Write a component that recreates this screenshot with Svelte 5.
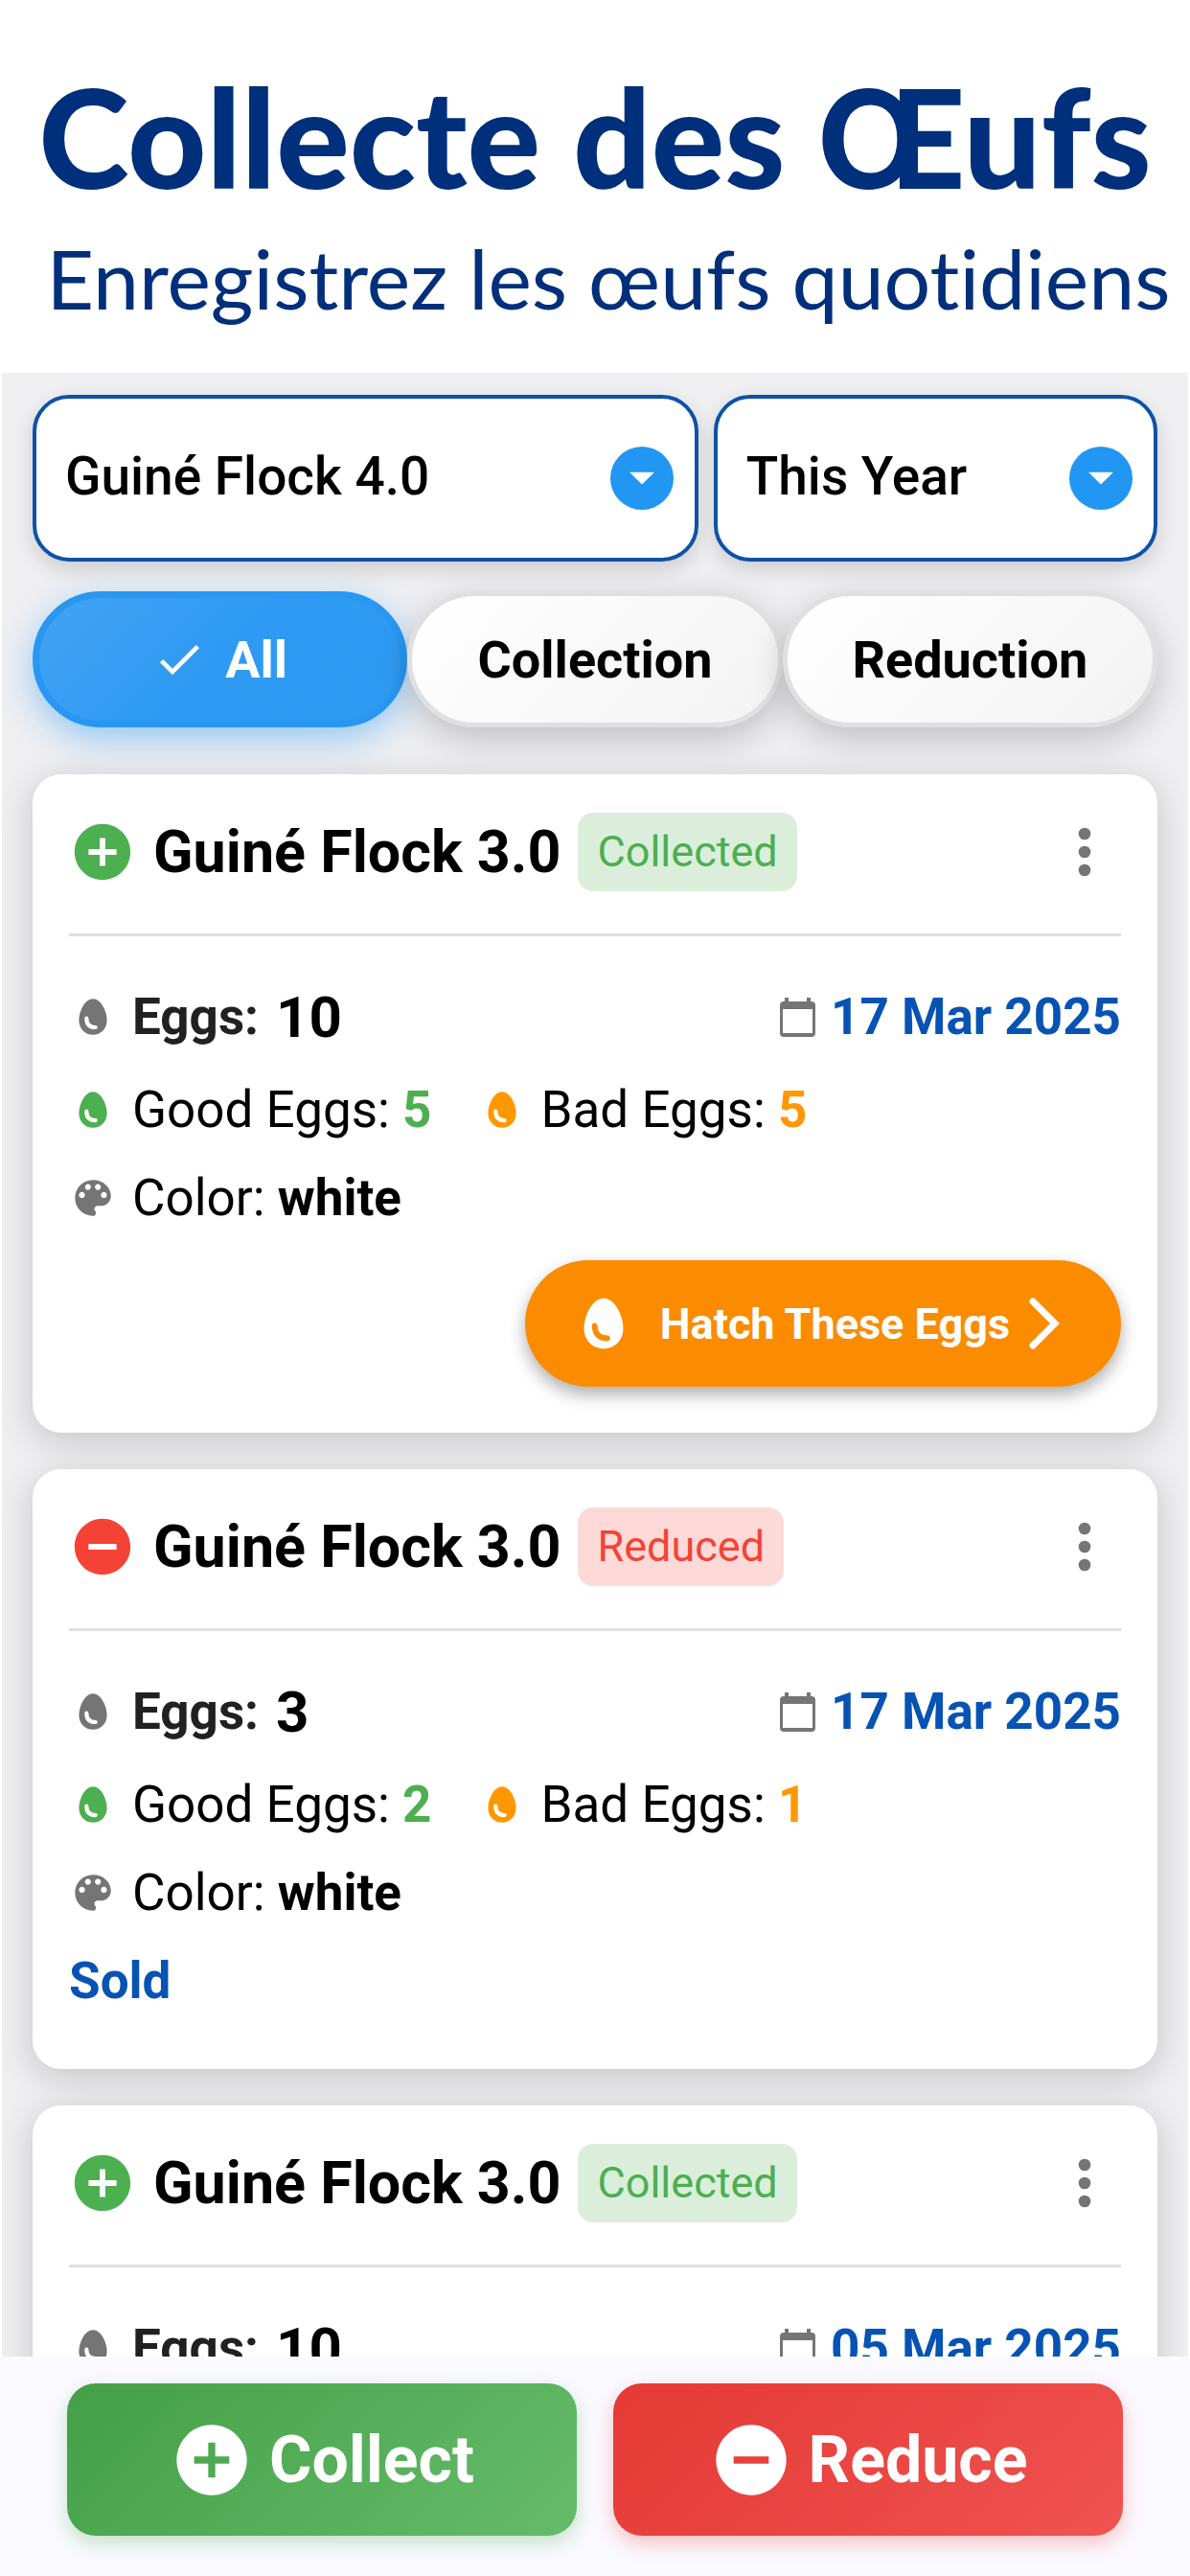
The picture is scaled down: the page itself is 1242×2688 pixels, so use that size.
<script>
    const flocks = ['Guiné Flock 4.0', 'Guiné Flock 3.0'];
    const periods = ['This Year', 'This Month', 'All Time'];
    const filters = ['All', 'Collection', 'Reduction'];

    const records = [
        { id: 1, flock: 'Guiné Flock 3.0', type: 'Collected', eggs: 10, good: 5, bad: 5, color: 'white', date: '17 Mar 2025', note: '' },
        { id: 2, flock: 'Guiné Flock 3.0', type: 'Reduced', eggs: 3, good: 2, bad: 1, color: 'white', date: '17 Mar 2025', note: 'Sold' },
        { id: 3, flock: 'Guiné Flock 3.0', type: 'Collected', eggs: 10, good: 5, bad: 5, color: 'white', date: '05 Mar 2025', note: '' }
    ];

    let flock = $state(flocks[0]);
    let period = $state(periods[0]);
    let active = $state('All');
</script>

{#snippet plusIcon()}
    <svg viewBox="0 0 24 24" aria-hidden="true">
        <path d="M12 2C6.48 2 2 6.48 2 12s4.48 10 10 10 10-4.48 10-10S17.52 2 12 2zm5 11h-4v4h-2v-4H7v-2h4V7h2v4h4v2z" />
    </svg>
{/snippet}

{#snippet minusIcon()}
    <svg viewBox="0 0 24 24" aria-hidden="true">
        <path d="M12 2C6.48 2 2 6.48 2 12s4.48 10 10 10 10-4.48 10-10S17.52 2 12 2zm5 11H7v-2h10v2z" />
    </svg>
{/snippet}

{#snippet eggIcon()}
    <svg viewBox="0 0 24 24" aria-hidden="true">
        <path d="M12 3C8 3 5 9.2 5 13.8C5 18 8 21 12 21s7-3 7-7.2C19 9.2 16 3 12 3z" />
        <path class="shine" d="M8.8 12.8c0 2.9 1.6 4.5 4.5 4.5" />
    </svg>
{/snippet}

{#snippet dropIcon()}
    <svg class="drop" viewBox="0 0 24 24" aria-hidden="true">
        <circle cx="12" cy="12" r="12" />
        <path d="M7.3 9.7h9.4L12 14.4z" />
    </svg>
{/snippet}

<div class="page">
    <header class="hero">
        <h1>Collecte des Œufs</h1>
        <p>Enregistrez les œufs quotidiens</p>
    </header>

    <main class="screen">
        <div class="selects">
            <div class="select">
                <select aria-label="Flock" bind:value={flock}>
                    {#each flocks as name}
                        <option>{name}</option>
                    {/each}
                </select>
                {@render dropIcon()}
            </div>
            <div class="select">
                <select aria-label="Period" bind:value={period}>
                    {#each periods as name}
                        <option>{name}</option>
                    {/each}
                </select>
                {@render dropIcon()}
            </div>
        </div>

        <div class="filters">
            {#each filters as name}
                <button class="filter" class:active={active === name} onclick={() => (active = name)}>
                    {#if active === name}
                        <svg viewBox="0 0 24 24" aria-hidden="true">
                            <path d="M9 16.17L4.83 12l-1.42 1.41L9 19 21 7l-1.41-1.41z" />
                        </svg>
                    {/if}
                    {name}
                </button>
            {/each}
        </div>

        <div class="list">
            {#each records as record (record.id)}
                <article class="card" class:reduced={record.type === 'Reduced'}>
                    <div class="card-head">
                        <span class="type-icon">
                            {#if record.type === 'Reduced'}
                                {@render minusIcon()}
                            {:else}
                                {@render plusIcon()}
                            {/if}
                        </span>
                        <h2>{record.flock}</h2>
                        <span class="badge">{record.type}</span>
                        <button class="more" aria-label="More">
                            <svg viewBox="0 0 24 24" aria-hidden="true">
                                <circle cx="12" cy="6" r="2" />
                                <circle cx="12" cy="12" r="2" />
                                <circle cx="12" cy="18" r="2" />
                            </svg>
                        </button>
                    </div>

                    <div class="row total">
                        <span class="icon gray">{@render eggIcon()}</span>
                        <span class="label">Eggs:</span>
                        <strong class="count">{record.eggs}</strong>
                        <span class="date">
                            <svg viewBox="0 0 37 41" aria-hidden="true">
                                <path d="M5 0h4v4h19V0h4v4h1a4 4 0 0 1 4 4v29a4 4 0 0 1-4 4H4a4 4 0 0 1-4-4V8a4 4 0 0 1 4-4h1zM3 12v25h31V12z" />
                            </svg>
                            {record.date}
                        </span>
                    </div>

                    <div class="row">
                        <span class="icon green">{@render eggIcon()}</span>
                        <span>Good Eggs: <strong class="green">{record.good}</strong></span>
                        <span class="icon orange next">{@render eggIcon()}</span>
                        <span>Bad Eggs: <strong class="orange">{record.bad}</strong></span>
                    </div>

                    <div class="row">
                        <span class="icon gray">
                            <svg viewBox="0 0 24 24" aria-hidden="true">
                                <path d="M12 3c-4.97 0-9 4.03-9 9s4.03 9 9 9c.83 0 1.5-.67 1.5-1.5 0-.39-.15-.74-.39-1.01-.23-.26-.38-.61-.38-.99 0-.83.67-1.5 1.5-1.5H16c2.76 0 5-2.24 5-5 0-4.42-4.03-8-9-8zm-5.5 9c-.83 0-1.5-.67-1.5-1.5S5.67 9 6.5 9 8 9.67 8 10.5 7.33 12 6.5 12zm3-4C8.67 8 8 7.33 8 6.5S8.67 5 9.5 5s1.5.67 1.5 1.5S10.33 8 9.5 8zm5 0c-.83 0-1.5-.67-1.5-1.5S13.67 5 14.5 5s1.5.67 1.5 1.5S15.33 8 14.5 8zm3 4c-.83 0-1.5-.67-1.5-1.5S16.67 9 17.5 9s1.5.67 1.5 1.5-.67 1.5-1.5 1.5z" />
                            </svg>
                        </span>
                        <span>Color: <strong>{record.color}</strong></span>
                    </div>

                    {#if record.note}
                        <p class="note">{record.note}</p>
                    {/if}

                    {#if record.type === 'Collected'}
                        <button class="hatch">
                            {@render eggIcon()}
                            <span>Hatch These Eggs</span>
                            <svg class="chevron" viewBox="0 0 32 54" aria-hidden="true">
                                <path d="M4 4l23 23L4 50" />
                            </svg>
                        </button>
                    {/if}
                </article>
            {/each}
        </div>
    </main>

    <footer class="actions">
        <button class="action collect">{@render plusIcon()}Collect</button>
        <button class="action reduce">{@render minusIcon()}Reduce</button>
    </footer>
</div>

<style>
    :global(body) {
        background: #ffffff;
    }

    .page {
        display: flex;
        flex-direction: column;
        height: 100vh;
        overflow: hidden;
        font-family: Roboto, sans-serif;
        color: #000000;
    }

    h1,
    h2,
    p {
        margin: 0;
    }

    button,
    select {
        font-family: inherit;
        color: inherit;
        border: none;
        cursor: pointer;
    }

    svg {
        display: block;
        flex-shrink: 0;
        fill: currentColor;
    }

    .hero {
        padding: 54px 0 40px;
        flex-shrink: 0;
        text-align: center;
        white-space: nowrap;
        color: #002f7c;
        font-family: Lato, 'Open Sans', sans-serif;
        font-variant-ligatures: none;
    }

    .hero h1 {
        font-size: 143px;
        line-height: 176px;
        font-weight: 900;
    }

    .hero p {
        padding-left: 28px;
        font-size: 86px;
        line-height: 119px;
    }

    .screen {
        flex: 1;
        min-height: 0;
        overflow: hidden;
        margin: 0 2px;
        padding: 23px 32px 0;
        background: #efeff2;
    }

    .selects {
        display: grid;
        grid-template-columns: 3fr 2fr;
        gap: 16px;
    }

    .select {
        position: relative;
    }

    .select select {
        display: block;
        width: 100%;
        height: 174px;
        padding: 0 100px 4px 30px;
        appearance: none;
        background: #ffffff;
        border: 4px solid #0d52a8;
        border-radius: 38px;
        box-shadow: 0 8px 20px rgba(0, 0, 0, 0.14);
        font-size: 55px;
        font-weight: 500;
    }

    .drop {
        position: absolute;
        right: 26px;
        top: 54px;
        width: 66px;
        height: 66px;
        color: #2196f3;
        pointer-events: none;
    }

    .drop path {
        fill: #ffffff;
    }

    .filters {
        display: grid;
        grid-template-columns: repeat(3, 1fr);
        margin-top: 31px;
    }

    .filter {
        display: flex;
        align-items: center;
        justify-content: center;
        gap: 20px;
        height: 142px;
        border: 5px solid #e0e0e0;
        border-radius: 71px;
        background: linear-gradient(135deg, #ffffff, #f3f3f3);
        box-shadow: 0 12px 36px rgba(0, 0, 0, 0.2);
        font-size: 54px;
        font-weight: 700;
    }

    .filter.active {
        border: 7px solid #2797f2;
        background: linear-gradient(135deg, #42a3f4, #2e9af3 50%, #2f9af2);
        box-shadow: 0 12px 36px rgba(33, 150, 243, 0.45);
        color: #ffffff;
    }

    .filter svg {
        width: 56px;
        height: 56px;
    }

    .list {
        display: flex;
        flex-direction: column;
        gap: 38px;
        margin-top: 49px;
    }

    .card {
        padding: 0 38px 48px;
        background: #ffffff;
        border-radius: 30px;
        box-shadow: 0 8px 36px rgba(0, 0, 0, 0.18);
        font-size: 53px;
    }

    .card-head {
        display: flex;
        align-items: center;
        height: 162px;
        padding-bottom: 4px;
        border-bottom: 3px solid #e0e0e0;
        margin-bottom: 49px;
    }

    .type-icon svg {
        width: 70px;
        height: 70px;
        color: #4caf50;
    }

    .reduced .type-icon svg {
        color: #f44336;
    }

    .card-head h2 {
        margin-left: 18px;
        font-size: 61px;
        font-weight: 700;
        white-space: nowrap;
    }

    .badge {
        margin-left: 18px;
        padding: 0 20px;
        border-radius: 16px;
        background: #dbeedc;
        color: #4caf50;
        font-size: 45px;
        line-height: 82px;
    }

    .reduced .badge {
        background: #fdd9d7;
        color: #f44336;
    }

    .more {
        margin-left: auto;
        padding: 0;
        background: none;
        color: #757575;
    }

    .more svg {
        width: 76px;
        height: 76px;
    }

    .row {
        display: flex;
        align-items: center;
        height: 60px;
        margin-bottom: 32px;
        white-space: nowrap;
    }

    .row.total {
        height: 70px;
    }

    .icon {
        margin-right: 16px;
    }

    .icon svg {
        width: 50px;
        height: 50px;
    }

    .next {
        margin-left: 48px;
    }

    .gray {
        color: #757575;
    }

    .green {
        color: #4caf50;
    }

    .orange {
        color: #ff9800;
    }

    .shine {
        fill: none;
        stroke: #ffffff;
        stroke-width: 2;
        stroke-linecap: round;
    }

    .label {
        color: #212121;
        font-weight: 700;
    }

    .count {
        margin-left: 18px;
        font-size: 60px;
    }

    .date {
        display: flex;
        align-items: center;
        gap: 16px;
        margin-left: auto;
        color: #0753b4;
        font-weight: 700;
    }

    .date svg {
        width: 37px;
        height: 41px;
        color: #757575;
    }

    .note {
        margin-bottom: 14px;
        color: #0753b4;
        font-weight: 700;
        line-height: 60px;
    }

    .hatch {
        display: flex;
        align-items: center;
        height: 132px;
        margin: 35px 0 0 auto;
        padding: 0 64px 0 47px;
        border-radius: 66px;
        background: #fb8c00;
        box-shadow: 0 8px 18px rgba(0, 0, 0, 0.32);
        color: #ffffff;
        font-size: 45px;
        font-weight: 700;
    }

    .hatch svg {
        width: 70px;
        height: 70px;
    }

    .hatch span {
        margin: 0 20px 0 24px;
    }

    .hatch .shine {
        stroke: #fb8c00;
    }

    .hatch .chevron {
        width: 32px;
        height: 54px;
        fill: none;
        stroke: currentColor;
        stroke-width: 7;
        stroke-linecap: round;
        stroke-linejoin: miter;
    }

    .actions {
        display: grid;
        grid-template-columns: 1fr 1fr;
        gap: 38px;
        flex-shrink: 0;
        padding: 28px 70px 42px;
        background: #faf9ff;
    }

    .action {
        display: flex;
        align-items: center;
        justify-content: center;
        gap: 16px;
        height: 159px;
        border-radius: 30px;
        color: #ffffff;
        font-size: 68px;
        font-weight: 700;
    }

    .action svg {
        width: 88px;
        height: 88px;
    }

    .collect {
        background: linear-gradient(135deg, #43a047, #66bb6a);
        box-shadow: 0 8px 20px rgba(76, 175, 80, 0.3);
    }

    .reduce {
        background: linear-gradient(135deg, #e53935, #ef5350);
        box-shadow: 0 8px 20px rgba(244, 67, 54, 0.3);
    }
</style>
